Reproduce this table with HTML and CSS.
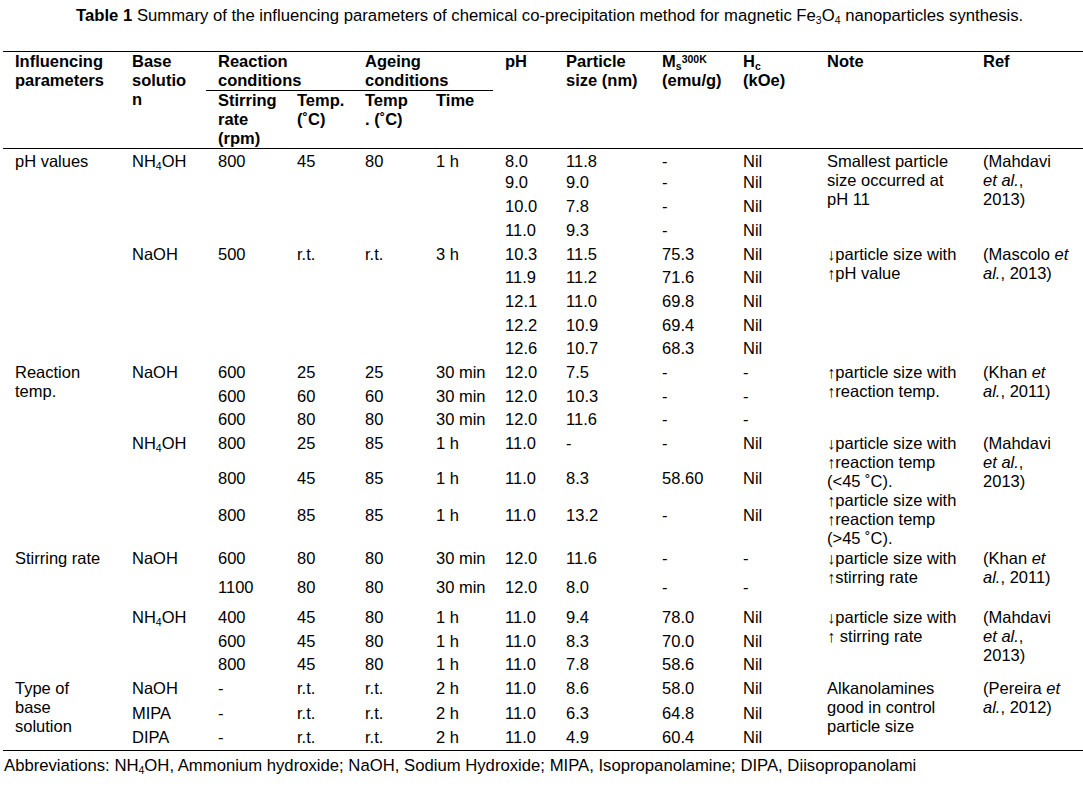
FILE: index.html
```html
<!DOCTYPE html>
<html lang="en">
<head>
<meta charset="utf-8">
<title>Table 1</title>
<link rel="stylesheet" href="styles.css">
</head>
<body>
<p class="caption"><b>Table 1</b> Summary of the influencing parameters of chemical co-precipitation method for magnetic Fe<span class="sub">3</span>O<span class="sub">4</span> nanoparticles synthesis.</p>
<table class="tbl">
  <colgroup>
    <col class="w117"><col class="w86"><col class="w79"><col class="w68"><col class="w71"><col class="w69">
    <col class="w61"><col class="w96"><col class="w81"><col class="w84"><col class="w156"><col class="w112">
  </colgroup>
  <thead>
    <tr class="hr1">
      <th rowspan="2">Influencing<br>parameters</th>
      <th rowspan="2">Base<br>solutio<br>n</th>
      <th colspan="2" class="grp">Reaction<br>conditions</th>
      <th colspan="2" class="grp">Ageing<br>conditions</th>
      <th rowspan="2">pH</th>
      <th rowspan="2">Particle<br>size (nm)</th>
      <th rowspan="2">M<span class="hsub">s</span><span class="hsup">300K</span><br>(emu/g)</th>
      <th rowspan="2">H<span class="hsub">c</span><br>(kOe)</th>
      <th rowspan="2">Note</th>
      <th rowspan="2">Ref</th>
    </tr>
    <tr class="hr2">
      <th>Stirring<br>rate<br>(rpm)</th>
      <th>Temp.<br>(˚C)</th>
      <th>Temp<br>. (˚C)</th>
      <th>Time</th>
    </tr>
  </thead>
  <tbody>
    <tr class="h24 first">
      <td rowspan="9">pH values</td>
      <td rowspan="4">NH<span class="sub">4</span>OH</td>
      <td rowspan="4">800</td><td rowspan="4">45</td><td rowspan="4">80</td><td rowspan="4">1 h</td>
      <td>8.0</td><td>11.8</td><td>-</td><td>Nil</td>
      <td rowspan="4">Smallest particle<br>size occurred at<br>pH 11</td>
      <td rowspan="4">(Mahdavi<br><i>et al.</i>,<br>2013)</td>
    </tr>
    <tr class="h24"><td>9.0</td><td>9.0</td><td>-</td><td>Nil</td></tr>
    <tr class="h24"><td>10.0</td><td>7.8</td><td>-</td><td>Nil</td></tr>
    <tr class="h24"><td>11.0</td><td>9.3</td><td>-</td><td>Nil</td></tr>
    <tr class="h23">
      <td rowspan="5">NaOH</td>
      <td rowspan="5">500</td><td rowspan="5">r.t.</td><td rowspan="5">r.t.</td><td rowspan="5">3 h</td>
      <td>10.3</td><td>11.5</td><td>75.3</td><td>Nil</td>
      <td rowspan="5">↓particle size with<br>↑pH value</td>
      <td rowspan="5">(Mascolo <i>et</i><br><i>al.</i>, 2013)</td>
    </tr>
    <tr class="h24"><td>11.9</td><td>11.2</td><td>71.6</td><td>Nil</td></tr>
    <tr class="h24"><td>12.1</td><td>11.0</td><td>69.8</td><td>Nil</td></tr>
    <tr class="h23"><td>12.2</td><td>10.9</td><td>69.4</td><td>Nil</td></tr>
    <tr class="h24"><td>12.6</td><td>10.7</td><td>68.3</td><td>Nil</td></tr>
    <tr class="h24">
      <td rowspan="6">Reaction<br>temp.</td>
      <td rowspan="3">NaOH</td>
      <td>600</td><td>25</td><td>25</td><td>30 min</td><td>12.0</td><td>7.5</td><td>-</td><td>-</td>
      <td rowspan="3">↑particle size with<br>↑reaction temp.</td>
      <td rowspan="3">(Khan <i>et</i><br><i>al.</i>, 2011)</td>
    </tr>
    <tr class="h23"><td>600</td><td>60</td><td>60</td><td>30 min</td><td>12.0</td><td>10.3</td><td>-</td><td>-</td></tr>
    <tr class="h24"><td>600</td><td>80</td><td>80</td><td>30 min</td><td>12.0</td><td>11.6</td><td>-</td><td>-</td></tr>
    <tr class="h35">
      <td rowspan="3">NH<span class="sub">4</span>OH</td>
      <td>800</td><td>25</td><td>85</td><td>1 h</td><td>11.0</td><td>-</td><td>-</td><td>Nil</td>
      <td rowspan="3">↓particle size with<br>↑reaction temp<br>(&lt;45 ˚C).<br>↑particle size with<br>↑reaction temp<br>(&gt;45 ˚C).</td>
      <td rowspan="3">(Mahdavi<br><i>et al.</i>,<br>2013)</td>
    </tr>
    <tr class="h37"><td>800</td><td>45</td><td>85</td><td>1 h</td><td>11.0</td><td>8.3</td><td>58.60</td><td>Nil</td></tr>
    <tr class="h43"><td>800</td><td>85</td><td>85</td><td>1 h</td><td>11.0</td><td>13.2</td><td>-</td><td>Nil</td></tr>
    <tr class="h29">
      <td rowspan="5">Stirring rate</td>
      <td rowspan="2">NaOH</td>
      <td>600</td><td>80</td><td>80</td><td>30 min</td><td>12.0</td><td>11.6</td><td>-</td><td>-</td>
      <td rowspan="2">↓particle size with<br>↑stirring rate</td>
      <td rowspan="2">(Khan <i>et</i><br><i>al.</i>, 2011)</td>
    </tr>
    <tr class="h30"><td>1100</td><td>80</td><td>80</td><td>30 min</td><td>12.0</td><td>8.0</td><td>-</td><td>-</td></tr>
    <tr class="h24">
      <td rowspan="3">NH<span class="sub">4</span>OH</td>
      <td>400</td><td>45</td><td>80</td><td>1 h</td><td>11.0</td><td>9.4</td><td>78.0</td><td>Nil</td>
      <td rowspan="3">↓particle size with<br>↑ stirring rate</td>
      <td rowspan="3">(Mahdavi<br><i>et al.</i>,<br>2013)</td>
    </tr>
    <tr class="h23"><td>600</td><td>45</td><td>80</td><td>1 h</td><td>11.0</td><td>8.3</td><td>70.0</td><td>Nil</td></tr>
    <tr class="h24"><td>800</td><td>45</td><td>80</td><td>1 h</td><td>11.0</td><td>7.8</td><td>58.6</td><td>Nil</td></tr>
    <tr class="h25">
      <td rowspan="3">Type of<br>base<br>solution</td>
      <td>NaOH</td><td>-</td><td>r.t.</td><td>r.t.</td><td>2 h</td><td>11.0</td><td>8.6</td><td>58.0</td><td>Nil</td>
      <td rowspan="3">Alkanolamines<br>good in control<br>particle size</td>
      <td rowspan="3">(Pereira <i>et</i><br><i>al.</i>, 2012)</td>
    </tr>
    <tr class="h24"><td>MIPA</td><td>-</td><td>r.t.</td><td>r.t.</td><td>2 h</td><td>11.0</td><td>6.3</td><td>64.8</td><td>Nil</td></tr>
    <tr class="h23"><td>DIPA</td><td>-</td><td>r.t.</td><td>r.t.</td><td>2 h</td><td>11.0</td><td>4.9</td><td>60.4</td><td>Nil</td></tr>
  </tbody>
</table>
<p class="abbr">Abbreviations: NH<span class="sub">4</span>OH, Ammonium hydroxide; NaOH, Sodium Hydroxide; MIPA, Isopropanolamine; DIPA, Diisopropanolami</p>
</body>
</html>
```

FILE: styles.css
```css
html, body {
  margin: 0;
  padding: 0;
  background: #ffffff;
}

body {
  width: 1083px;
  height: 786px;
  overflow: hidden;
  font-family: "Liberation Sans", Arial, sans-serif;
  font-size: 16.5px;
  line-height: 19px;
  color: #000000;
}

.caption {
  margin: 0;
  height: 51px;
  padding: 6px 0 0 76px;
  box-sizing: border-box;
  font-size: 16.7px;
  line-height: 19px;
  white-space: nowrap;
}

.sub {
  font-size: 10.5px;
  line-height: 0;
  vertical-align: -3px;
}

.tbl {
  margin-left: 3px;
  width: 1080px;
  table-layout: fixed;
  border-collapse: collapse;
  border-spacing: 0;
  border-top: 1px solid #000;
  border-bottom: 1px solid #000;
}

.tbl thead {
  border-bottom: 1px solid #000;
}

.tbl th,
.tbl td {
  padding: 0 0 0 12px;
  vertical-align: top;
  text-align: left;
  white-space: nowrap;
  font-weight: normal;
}

.tbl th {
  font-weight: bold;
}

.tbl th.grp {
  border-bottom: 1px solid #000;
}

.hsub {
  font-size: 10.5px;
  line-height: 0;
  vertical-align: -3px;
}

.hsup {
  font-size: 10.5px;
  line-height: 0;
  vertical-align: 4px;
}

.w117 { width: 117px; }
.w86 { width: 86px; }
.w79 { width: 79px; }
.w68 { width: 68px; }
.w71 { width: 71px; }
.w69 { width: 69px; }
.w61 { width: 61px; }
.w96 { width: 96px; }
.w81 { width: 81px; }
.w84 { width: 84px; }
.w156 { width: 156px; }
.w112 { width: 112px; }

.hr1 { height: 38px; }
.hr2 { height: 57px; }

.tbl tr.first td { padding-top: 3px; }

.h23 { height: 23px; }
.h24 { height: 24px; }
.h25 { height: 25px; }
.h29 { height: 29px; }
.h30 { height: 30px; }
.h35 { height: 35px; }
.h37 { height: 37px; }
.h43 { height: 43px; }

.abbr {
  margin: 5px 0 0 4px;
  font-size: 16.7px;
  white-space: nowrap;
}
```
